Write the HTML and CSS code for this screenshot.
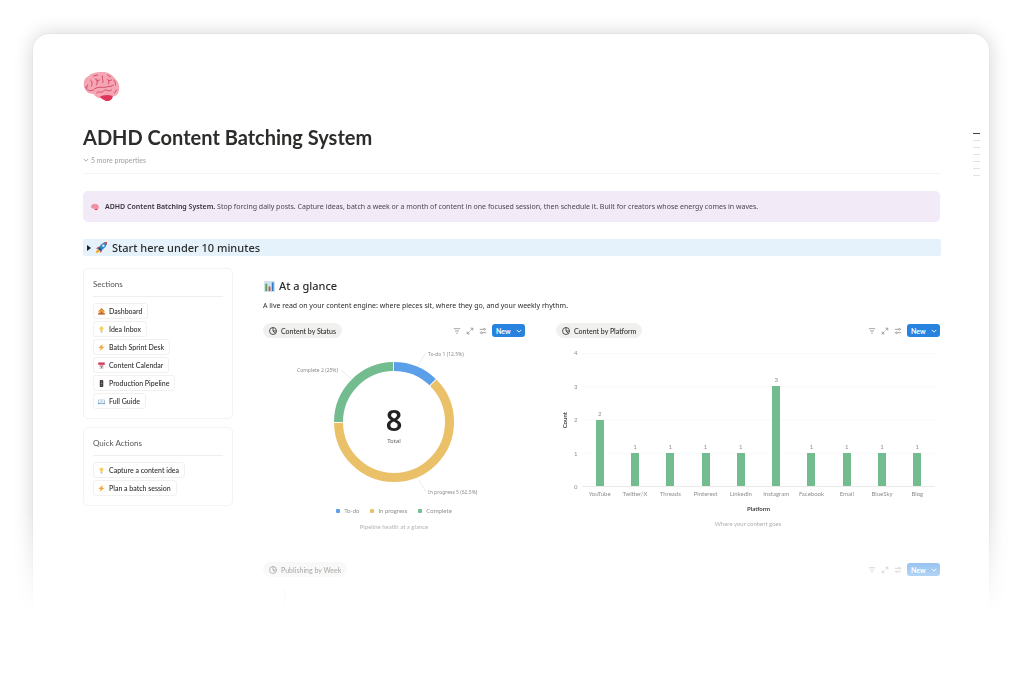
FILE: index.html
```html
<!DOCTYPE html>
<html lang="en">
<head>
<meta charset="utf-8">
<meta name="viewport" content="width=device-width, initial-scale=1">
<title>ADHD Content Batching System</title>
<link rel="stylesheet" href="styles.css">
</head>
<body>
<svg class="sprite" aria-hidden="true">
  <symbol id="brain" viewBox="0 0 36 30">
    <path fill="#e0355b" d="M15 25c2-2 9-3 14-2 1 3-2 6-5 6-3 0-4-2-9-4z"/>
    <path fill="#f4a6b5" d="M17 0c7-1 12 3 15 7 4 4 5 10 2 15-2 3-5 2-8 2-4 0-6 2-9 2-4 0-5-2-7-4C5 22 2 19 1 16-1 10 1 6 5 4c3-3 7-4 12-4z"/>
    <g fill="none" stroke="#dc4a68" stroke-width="1" stroke-linecap="round">
      <path d="M2 15c2 4 6 5 9 2 4-3 9-1 12-2 2-1 5 0 7-2"/><path d="M13 21c3-3 4 1 7-2s4 2 8-1M7 8c2 1 2 4 1 6M12 7c3 0 2 3 1 6M13 9l3-1M19 4c-1 4 2 5 0 7M24 7c1 1 2 3 1 5M25 9l3-1M10 4l4-1M24 3l3 2M30 8c2 1 2 3 2 5M4 13l-1 3M31 21l2-3"/>
    </g>
    <path fill="#e0355b" d="M16 25c3-2 9-3 13-1 0 3-3 5-6 5-3-1-4-3-7-4z"/>
  </symbol>
  <symbol id="rocket" viewBox="0 0 12 12">
    <path fill="#c9302c" d="M3 5 0 7l3 .5zM7 9l-2 3-.5-3z"/><path fill="#f5a623" d="M3 8c-2 0-3 2-3 4 2 0 4-1 4-3z"/><path fill="#2f86c9" d="M12 0C8 0 4 3 2.500 7.500l2 2C9 8 12 4 12 0z"/><path fill="#1c4f8c" d="M3.500 5.500 2.500 7.500l2 2 2-1z"/><circle cx="8" cy="4" r="1.300" fill="#e8f3fc"/><path fill="#d9433f" d="M12 0C10.500 0 9.500.3 8.700.8l2.500 2.500C11.800 2.200 12 1 12 0z"/>
  </symbol>
  <symbol id="chart" viewBox="0 0 12 12">
    <rect width="12" height="12" rx="1" fill="#cfe2ee"/><path fill="#51a351" d="M1.500 3h2v8h-2z"/><path fill="#d04a4a" d="M5 6h2v5H5z"/><path fill="#2d7dc8" d="M8.500 1.500h2V11h-2z"/>
  </symbol>
  <symbol id="bell" viewBox="0 0 8 8"><path fill="#efb23c" d="M4 .5 7 4v3H1V4z"/><path fill="#b85a35" d="M3 4h2v3H3zM0 6h8v1.500H0z"/><path fill="#df7f35" d="M4 0 8 4H6.500L4 2 1.500 4H0z"/></symbol>
  <symbol id="bulb" viewBox="0 0 8 8"><circle cx="4" cy="2.700" r="2.200" fill="#f8cf63"/><path fill="#f8cf63" d="M2.800 4.500h2.400V6H2.800z"/><path fill="#aeb4b8" d="M3 6h2v1.500H3z"/></symbol>
  <symbol id="bolt" viewBox="0 0 8 8"><path fill="#f5a32d" d="M5.500 0 .5 4.600h2.700L1.800 8 7.500 3.200H4.600z"/></symbol>
  <symbol id="calendar" viewBox="0 0 8 8"><path fill="#dfe5ea" d="M.5 2h7l-1 6h-5z"/><path fill="#d43a55" d="M.3.5h7.400v2.700H.3z"/><path fill="none" stroke="#c23b5a" d="M2.500 4.500h2.500L3.500 7.500"/></symbol>
  <symbol id="light" viewBox="0 0 8 8"><rect x="2" width="4" height="8" rx="1" fill="#3b3b3e"/><circle cx="4" cy="1.700" r=".9" fill="#c54343"/><circle cx="4" cy="4" r=".9" fill="#b58a35"/><circle cx="4" cy="6.300" r=".9" fill="#4a8c55"/></symbol>
  <symbol id="book" viewBox="0 0 8 8"><path fill="#69a2cb" d="M0 2h8v5H0z"/><path fill="#e5edf2" d="M.5 1.300 4 2l3.500-.7v4.500L4 6.300.5 5.800z"/><path stroke="#a9bac6" stroke-width=".5" d="M4 2v4.300"/></symbol>
  <symbol id="pie" viewBox="0 0 8 8"><g fill="none" stroke="currentColor" stroke-width=".8"><circle cx="4" cy="4" r="3.500"/><path d="M4 .6V4l2.300 2.400M4 4h3.400"/></g></symbol>
  <symbol id="filter" viewBox="0 0 8 8"><path fill="none" stroke="currentColor" stroke-width=".8" d="M.8 1.700h6.400M2 4h4M3.200 6.300h1.600"/></symbol>
  <symbol id="expand" viewBox="0 0 8 8"><path fill="none" stroke="currentColor" stroke-width=".8" d="M4.500 1.200h2.300v2.300M6.800 1.200 4.500 3.500M3.500 6.800H1.200V4.500M1.200 6.800l2.300-2.300"/></symbol>
  <symbol id="sliders" viewBox="0 0 8 8"><g fill="none" stroke="currentColor" stroke-width=".8"><path d="M.8 2.300h3.600M6.400 2.300h.8M.8 5.700h.8M3.600 5.700h3.600"/><circle cx="5.400" cy="2.300" r=".9"/><circle cx="2.600" cy="5.700" r=".9"/></g></symbol>
  <symbol id="chevron" viewBox="0 0 8 8"><path fill="none" stroke="currentColor" stroke-width="1.200" d="M1 2.500 4 5.500 7 2.500"/></symbol>
</svg>

<div class="stage">
  <main class="page">
    <nav class="outline" aria-label="Page outline"><i class="current"></i><i></i><i></i><i></i><i></i><i></i><i></i></nav>
    <header class="header">
      <svg class="brain"><use href="#brain"/></svg>
      <h1>ADHD Content Batching System</h1>
      <button class="more"><svg class="icon tiny"><use href="#chevron"/></svg>5 more properties</button>
    </header>

    <p class="callout"><svg class="icon"><use href="#brain"/></svg><span><strong>ADHD Content Batching System.</strong> Stop forcing daily posts. Capture ideas, batch a week or a month of content in one focused session, then schedule it. Built for creators whose energy comes in waves.</span></p>

    <details class="start">
      <summary><span class="arrow"></span><svg class="emoji"><use href="#rocket"/></svg>Start here under 10 minutes</summary>
    </details>

    <div class="columns">
      <aside class="sidebar">
        <nav class="card" aria-labelledby="sections">
          <h2 id="sections">Sections</h2>
          <a href="#"><svg class="icon"><use href="#bell"/></svg>Dashboard</a>
          <a href="#"><svg class="icon"><use href="#bulb"/></svg>Idea Inbox</a>
          <a href="#"><svg class="icon"><use href="#bolt"/></svg>Batch Sprint Desk</a>
          <a href="#"><svg class="icon"><use href="#calendar"/></svg>Content Calendar</a>
          <a href="#"><svg class="icon"><use href="#light"/></svg>Production Pipeline</a>
          <a href="#"><svg class="icon"><use href="#book"/></svg>Full Guide</a>
        </nav>
        <section class="card">
          <h2>Quick Actions</h2>
          <button><svg class="icon"><use href="#bulb"/></svg>Capture a content idea</button>
          <button><svg class="icon"><use href="#bolt"/></svg>Plan a batch session</button>
        </section>
      </aside>

      <div class="content">
        <h2 class="glance"><svg class="emoji"><use href="#chart"/></svg>At a glance</h2>
        <p class="lead">A live read on your content engine: where pieces sit, where they go, and your weekly rhythm.</p>

        <div class="charts">
          <section class="view">
            <div class="toolbar">
              <button class="tab"><svg class="icon"><use href="#pie"/></svg>Content by Status</button>
              <button class="tool" aria-label="Filter"><svg class="icon"><use href="#filter"/></svg></button>
              <button class="tool" aria-label="Expand"><svg class="icon"><use href="#expand"/></svg></button>
              <button class="tool" aria-label="Settings"><svg class="icon"><use href="#sliders"/></svg></button>
              <button class="new">New<svg class="icon tiny"><use href="#chevron"/></svg></button>
            </div>
            <svg class="donut" viewBox="0 0 262 156" role="img" aria-label="Content by status">
              <g fill="none" stroke-width="9" transform="rotate(-90 131 78)">
                <circle cx="131" cy="78" r="55.500" pathLength="800" stroke="#5b9fe9" stroke-dasharray="98 702"/>
                <circle cx="131" cy="78" r="55.500" pathLength="800" stroke="#eac169" stroke-dasharray="498 302" stroke-dashoffset="-100"/>
                <circle cx="131" cy="78" r="55.500" pathLength="800" stroke="#72bc8f" stroke-dasharray="198 602" stroke-dashoffset="-600"/>
              </g>
              <path class="leader" d="m155 22 7-12M78 26l10 9M156 136l7 12"/>
              <text class="total" x="131" y="87">8</text>
              <text class="caption" x="131" y="99">Total</text>
              <text class="slice" x="165" y="12">To-do 1 (12.5%)</text>
              <text class="slice" x="34" y="28">Complete 2 (25%)</text>
              <text class="slice" x="165" y="150">In progress 5 (62.5%)</text>
            </svg>
            <ul class="legend"><li class="todo">To-do</li><li class="progress">In progress</li><li class="complete">Complete</li></ul>
            <p class="note">Pipeline health at a glance</p>
          </section>

          <section class="view">
            <div class="toolbar">
              <button class="tab"><svg class="icon"><use href="#pie"/></svg>Content by Platform</button>
              <button class="tool" aria-label="Filter"><svg class="icon"><use href="#filter"/></svg></button>
              <button class="tool" aria-label="Expand"><svg class="icon"><use href="#expand"/></svg></button>
              <button class="tool" aria-label="Settings"><svg class="icon"><use href="#sliders"/></svg></button>
              <button class="new">New<svg class="icon tiny"><use href="#chevron"/></svg></button>
            </div>
            <div class="bars">
              <span class="ylabel">Count</span>
              <div class="yaxis"><span>4</span><span>3</span><span>2</span><span>1</span><span>0</span></div>
              <div class="plot">
                <div class="col two"><b>2</b><i></i></div><div class="col"><b>1</b><i></i></div><div class="col"><b>1</b><i></i></div><div class="col"><b>1</b><i></i></div><div class="col"><b>1</b><i></i></div><div class="col three"><b>3</b><i></i></div><div class="col"><b>1</b><i></i></div><div class="col"><b>1</b><i></i></div><div class="col"><b>1</b><i></i></div><div class="col"><b>1</b><i></i></div>
              </div>
              <div class="xaxis"><span>YouTube</span><span>Twitter/X</span><span>Threads</span><span>Pinterest</span><span>LinkedIn</span><span>Instagram</span><span>Facebook</span><span>Email</span><span>BlueSky</span><span>Blog</span></div>
              <span class="xlabel">Platform</span>
            </div>
            <p class="note">Where your content goes</p>
          </section>
        </div>

        <section class="view week">
          <div class="toolbar">
            <button class="tab"><svg class="icon"><use href="#pie"/></svg>Publishing by Week</button>
            <button class="tool" aria-label="Filter"><svg class="icon"><use href="#filter"/></svg></button>
            <button class="tool" aria-label="Expand"><svg class="icon"><use href="#expand"/></svg></button>
            <button class="tool" aria-label="Settings"><svg class="icon"><use href="#sliders"/></svg></button>
            <button class="new">New<svg class="icon tiny"><use href="#chevron"/></svg></button>
          </div>
          <div class="weekplot"></div>
        </section>
      </div>
    </div>
  </main>
</div>
</body>
</html>
```
FILE: styles.css
```css
* { box-sizing: border-box; }

body {
  margin: 0;
  background: #fff;
  color: #2c2c2b;
  font: 7px/10px Lato, "Noto Sans", sans-serif;
}

h1, h2, p, ul { margin: 0; padding: 0; }

button {
  font: inherit;
  color: inherit;
  border: 0;
  padding: 0;
  background: none;
}

a { color: inherit; text-decoration: none; }

.sprite { position: absolute; width: 0; height: 0; }

.icon { width: 8px; height: 8px; flex: none; }
.tiny { width: 6px; height: 6px; }
.emoji { width: 11px; height: 11px; flex: none; }

.stage {
  height: 100vh;
  min-height: 640px;
  overflow: hidden;
  padding: 34px 35px 0 33px;
  -webkit-mask-image: linear-gradient(#000 510px, transparent 612px);
  mask-image: linear-gradient(#000 510px, transparent 612px);
}

.page {
  position: relative;
  min-height: 800px;
  padding: 38px 48px 0 50px;
  border-radius: 16px;
  background: #fff;
  box-shadow: 0 0 20px rgba(0, 0, 0, .18), 0 0 2px rgba(0, 0, 0, .08);
}

.outline {
  position: absolute;
  top: 99px;
  right: 9px;
  display: grid;
  gap: 6px;
}
.outline i { width: 7px; height: 1px; background: #e2e2e2; }
.outline .current { background: #444; }

.header { border-bottom: 1px solid #f3f3f3; padding-bottom: 8px; }
.brain { display: block; width: 37px; height: 30px; }
h1 { margin-top: 21px; font-size: 20px; line-height: 28px; font-weight: 700; }
.more {
  display: flex;
  align-items: center;
  gap: 2px;
  margin-top: 4px;
  color: #a0a09e;
}

.callout {
  display: flex;
  align-items: center;
  gap: 6px;
  min-height: 31px;
  margin: 17px 1px 17px 0;
  padding: 1px 8px 0;
  border-radius: 5px;
  background: #f2eaf7;
  color: #4b464d;
  font-family: "Noto Sans", sans-serif;
}
.callout strong { color: #37333a; font-weight: 600; }

.start { background: #e6f2fb; border-radius: 2px; }
.start summary {
  display: flex;
  align-items: center;
  gap: 5px;
  padding-left: 4px;
  list-style: none;
  font: 500 11px/17px "Noto Sans", sans-serif;
}
.arrow {
  border-left: 4px solid #222;
  border-top: 3px solid transparent;
  border-bottom: 3px solid transparent;
}

.columns {
  display: grid;
  grid-template-columns: 150px minmax(0, 1fr);
  gap: 30px;
  margin-top: 12px;
}
.sidebar { display: grid; align-content: start; gap: 8px; }

.card {
  display: flex;
  flex-direction: column;
  align-items: flex-start;
  gap: 2px;
  padding: 9px;
  border: 1px solid #f3f3f3;
  border-radius: 5px;
}
.card h2 {
  align-self: stretch;
  margin-bottom: 4px;
  padding-bottom: 6px;
  border-bottom: 1px solid #efefee;
  font-size: 8px;
  line-height: 12px;
  font-weight: 400;
  color: #555;
}
.card a, .card button {
  display: flex;
  align-items: center;
  gap: 4px;
  height: 16px;
  padding: 0 5px 0 4px;
  border: 1px solid #f1f1f0;
  border-radius: 3px;
  font-weight: 500;
}
.card .icon { width: 7px; height: 7px; }

.glance {
  display: flex;
  align-items: center;
  gap: 4px;
  margin-top: 9px;
  padding-left: 1px;
  font: 500 11px/18px "Noto Sans", sans-serif;
}
.lead { margin-top: 6px; font-family: "Noto Sans", sans-serif; }

.charts {
  display: grid;
  grid-template-columns: 262fr 384fr;
  gap: 31px;
  margin: 12px 1px 0 0;
}
.toolbar { display: flex; align-items: center; }
.tab {
  display: flex;
  align-items: center;
  gap: 4px;
  height: 15px;
  margin-right: auto;
  padding: 0 6px;
  border-radius: 8px;
  background: #f0f0ef;
  font-weight: 500;
}
.tool { display: flex; margin-right: 5px; color: #8e8e8c; }
.new {
  display: flex;
  align-items: center;
  justify-content: space-between;
  width: 33px;
  height: 13px;
  padding: 0 3px 0 4px;
  border-radius: 3px;
  background: #2783de;
  color: #fff;
  font-weight: 700;
}

.donut { display: block; width: 100%; margin-top: 6px; font-family: "Noto Sans", sans-serif; }
.donut text { fill: #8c8c8a; font-size: 5px; }
.donut .total { fill: #222; font-size: 29px; font-weight: 600; text-anchor: middle; }
.donut .caption { fill: #666; font-size: 6px; text-anchor: middle; }
.leader { fill: none; stroke: #ececec; }

.legend {
  display: flex;
  justify-content: center;
  gap: 11px;
  margin-top: 6px;
  list-style: none;
  color: #8e8e8c;
  font-size: 6px;
}
.legend li { display: flex; align-items: center; gap: 4px; }
.legend li::before { content: ""; width: 4px; height: 4px; border-radius: 1px; background: #5b9fe9; }
.legend .progress::before { background: #eac169; }
.legend .complete::before { background: #72bc8f; }

.note { margin-top: 6px; color: #a3a3a1; font-size: 6px; text-align: center; }

.bars {
  display: grid;
  grid-template-columns: 18px 8px minmax(0, 1fr);
  grid-template-rows: 134px auto auto;
  margin-top: 15px;
  padding-right: 5px;
  color: #8e8e8c;
  font-size: 6px;
}
.ylabel {
  writing-mode: vertical-rl;
  transform: rotate(180deg);
  align-self: center;
  justify-self: center;
  color: #444;
  font-weight: 700;
}
.yaxis {
  display: flex;
  flex-direction: column;
  justify-content: space-between;
  margin: -5px 0;
}
.plot {
  display: grid;
  grid-template-columns: repeat(10, 1fr);
  border-bottom: 1px solid #e9e9e8;
  background: linear-gradient(#f9f9f9 1px, transparent 1px) 0 0 / 100% 25%;
}
.col { display: flex; flex-direction: column; justify-content: flex-end; align-items: center; }
.col b { font-weight: 400; line-height: 8px; margin-bottom: 2px; }
.col i { width: 8px; height: 25%; background: #72bc8f; }
.two i { height: 50%; }
.three i { height: 75%; }
.xaxis {
  grid-column: 3;
  display: grid;
  grid-template-columns: repeat(10, 1fr);
  margin-top: 2px;
  text-align: center;
}
.xlabel {
  grid-column: 3;
  margin-top: 5px;
  text-align: center;
  color: #444;
  font-weight: 700;
}
.bars + .note { margin-top: 5px; }
.week { margin: 30px 1px 0 0; }
.weekplot { width: 1px; height: 24px; margin: 12px 0 0 21px; background: #ddd; }
```
